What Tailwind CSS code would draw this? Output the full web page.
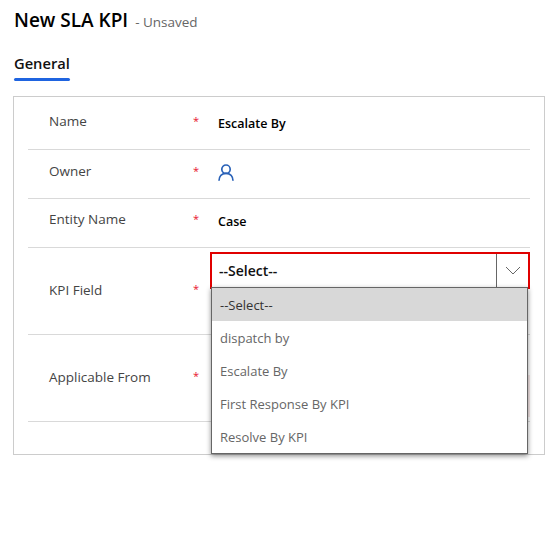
<!DOCTYPE html>
<html lang="en">
<head>
  <meta charset="UTF-8" />
  <title>New SLA KPI</title>
  <script src="https://cdn.jsdelivr.net/npm/@tailwindcss/browser@4"></script>
</head>
<body class="bg-white font-['Open_Sans',sans-serif] w-[552px] h-[540px] overflow-hidden">
  <!-- Header -->
  <div class="flex items-baseline pl-[14px] pt-[7px] h-[40px]">
    <h1 class="text-[19px] leading-[26px] font-semibold text-black">New SLA KPI</h1>
    <span class="ml-[7px] text-[13.5px] text-[#666666]">- Unsaved</span>
  </div>

  <!-- Tab -->
  <div class="pl-[14px] pt-[13px] h-[56px]">
    <div class="w-max">
      <div class="text-[14.7px] leading-[20px] font-semibold text-[#111111]">General</div>
      <div class="h-[3px] mt-[5px] bg-[#1f64e0] rounded-sm"></div>
    </div>
  </div>

  <!-- Form card -->
  <div class="ml-[13px] w-[532px] h-[359px] border border-[#cccccc] px-[14px]">
    <div class="flex h-[53px] border-b border-[#d9d9d9]">
      <div class="w-[165px] shrink-0 pl-[21px] pt-[15px] text-[13.5px] leading-[18px] text-[#444444]">Name</div>
      <div class="w-[25px] shrink-0 pt-[15px] text-[11px] leading-[18px] text-[#e8112d]">*</div>
      <div class="pt-[18px] text-[12.5px] leading-[18px] font-semibold text-black">Escalate By</div>
    </div>
    <div class="flex h-[49px] border-b border-[#d9d9d9]">
      <div class="w-[165px] shrink-0 pl-[21px] pt-[12px] text-[13.5px] leading-[18px] text-[#444444]">Owner</div>
      <div class="w-[25px] shrink-0 pt-[12px] text-[11px] leading-[18px] text-[#e8112d]">*</div>
      <div class="pt-[14px]">
        <svg width="16" height="17" viewBox="0 0 16 17" fill="none" stroke="#2a62b8" stroke-width="1.7">
          <circle cx="8" cy="5.2" r="4.2" />
          <path d="M1 16.8c0-4.5 2.8-7.5 7-7.5s7 3 7 7.5" />
        </svg>
      </div>
    </div>
    <div class="flex h-[49px] border-b border-[#d9d9d9]">
      <div class="w-[165px] shrink-0 pl-[21px] pt-[11px] text-[13.5px] leading-[18px] text-[#444444]">Entity Name</div>
      <div class="w-[25px] shrink-0 pt-[11px] text-[11px] leading-[18px] text-[#e8112d]">*</div>
      <div class="pt-[14px] text-[12.5px] leading-[18px] font-semibold text-black">Case</div>
    </div>
    <div class="flex h-[87px] border-b border-[#d9d9d9]">
      <div class="w-[165px] shrink-0 pl-[21px] pt-[33px] text-[13.5px] leading-[18px] text-[#444444]">KPI Field</div>
      <div class="w-[25px] shrink-0 pt-[32px] text-[11px] leading-[18px] text-[#e8112d]">*</div>
      <div class="relative">
        <div class="flex w-[320px] h-[37px] mt-[4px] -ml-[8px] border-2 border-[#e00000]">
          <div class="flex-1 pl-[7px] text-[14px] leading-[34px] font-semibold text-[#111111]">--Select--</div>
          <div class="w-[32px] border-l border-[#666666] flex items-center justify-center">
            <svg width="16" height="9" viewBox="0 0 16 9" fill="none" stroke="#666666" stroke-width="1">
              <path d="M1 1l7 7 7-7" />
            </svg>
          </div>
        </div>
        <!-- Open dropdown -->
        <div class="absolute left-[-7px] top-[39px] z-10 w-[317px] bg-white border border-[#666666] shadow-[0_2px_5px_rgba(0,0,0,0.45)] text-[13px] leading-[35px] text-[#666666]">
          <div class="h-[33px] pl-[8px] bg-[#d8d8d8] text-[#333333]">--Select--</div>
          <div class="h-[33px] pl-[8px]">dispatch by</div>
          <div class="h-[33px] pl-[8px]">Escalate By</div>
          <div class="h-[33px] pl-[8px]">First Response By KPI</div>
          <div class="h-[33px] pl-[8px]">Resolve By KPI</div>
        </div>
      </div>
    </div>
    <div class="flex h-[87px] border-b border-[#d9d9d9]">
      <div class="w-[165px] shrink-0 pl-[21px] pt-[33px] text-[13.5px] leading-[18px] text-[#444444]">Applicable From</div>
      <div class="w-[25px] shrink-0 pt-[32px] text-[11px] leading-[18px] text-[#e8112d]">*</div>
      <!-- date field, mostly hidden by the dropdown -->
      <div class="w-[320px] shrink-0 h-[42px] mt-[40px] -ml-[8px] border-r-2 border-[#f6e8e8]"></div>
    </div>
  </div>
</body>
</html>
